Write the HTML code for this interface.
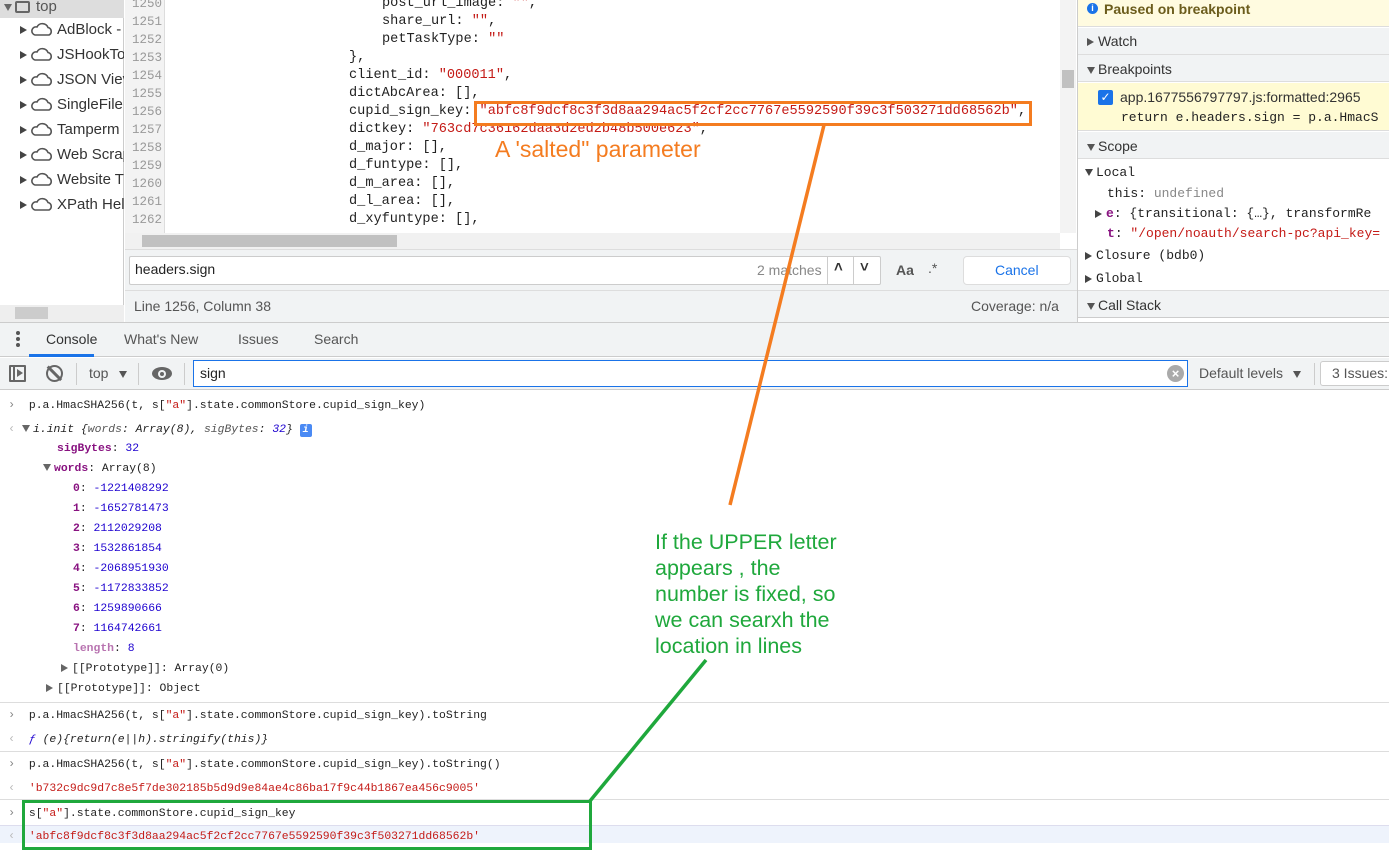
<!DOCTYPE html>
<html><head><meta charset="utf-8"><style>
*{margin:0;padding:0;box-sizing:border-box}
body{width:1389px;height:843px;overflow:hidden;background:#fff;font-family:"Liberation Sans","DejaVu Sans",sans-serif;font-size:14px;color:#222;position:relative}
.a{position:absolute;white-space:pre}
.m{font-family:"Liberation Mono","DejaVu Sans Mono",monospace}
.code{font-size:13.6px;color:#222}
.str{color:#c41a16}
.ln{color:#999;font-size:12.5px;text-align:right;width:38px}
.con{font-size:11.4px;color:#222;line-height:20px}
.k{color:#881280}
.n{color:#1c00cf}
.tri{display:inline-block;width:0;height:0;border-left:4px solid transparent;border-right:4px solid transparent;border-top:7px solid #666;margin-right:3px;vertical-align:middle}
.trr{display:inline-block;width:0;height:0;border-top:4px solid transparent;border-bottom:4px solid transparent;border-left:7px solid #666;margin-right:4px;vertical-align:middle}
.hline{position:absolute;height:1px;background:#ddd}
.chev{color:#888;font-size:12px}
</style></head><body>

<div class="a" style="left:0;top:0;width:124px;height:322px;background:#fff;border-right:1px solid #ccc"></div>
<div class="a" style="left:0;top:0;width:124px;height:18px;background:#ddd"></div>
<div class="a" style="left:4px;top:-2px;font-size:15px;color:#555"><span class="tri"></span><span style="display:inline-block;width:15px;height:12px;border:2px solid #666;border-radius:2px;vertical-align:middle;margin-right:6px"></span>top</div>
<div id="tree"></div>
<div class="a" style="left:0;top:305px;width:124px;height:17px;background:#eee"></div>
<div class="a" style="left:15px;top:307px;width:33px;height:12px;background:#ccc"></div>

<div class="a" style="left:125px;top:0;width:40px;height:233px;background:#f3f3f3;border-right:1px solid #ddd"></div>
<div id="code"></div>
<div class="a" style="left:1060px;top:0;width:16px;height:233px;background:#f3f3f3"></div>
<div class="a" style="left:1062px;top:70px;width:12px;height:18px;background:#c1c1c1"></div>
<div class="a" style="left:125px;top:233px;width:935px;height:16px;background:#f1f1f1"></div>
<div class="a" style="left:142px;top:235px;width:255px;height:12px;background:#c1c1c1"></div>
<div class="a" style="left:125px;top:249px;width:952px;height:1px;background:#ddd"></div>
<div class="a" style="left:125px;top:250px;width:952px;height:40px;background:#f1f3f4"></div>
<div class="a" style="left:129px;top:256px;width:752px;height:29px;background:#fff;border:1px solid #ccc;border-radius:2px"></div>
<div class="a" style="left:135px;top:261px;font-size:14px;color:#222">headers.sign</div>
<div class="a" style="left:757px;top:262px;font-size:14px;color:#888">2 matches</div>
<div class="a" style="left:827px;top:256px;width:1px;height:29px;background:#ccc"></div>
<div class="a" style="left:853px;top:256px;width:1px;height:29px;background:#ccc"></div>
<div class="a" style="left:834px;top:259px;font-size:15px;font-weight:bold;color:#333">&#708;</div>
<div class="a" style="left:860px;top:259px;font-size:15px;font-weight:bold;color:#333">&#709;</div>
<div class="a" style="left:896px;top:262px;font-size:14px;font-weight:bold;color:#555">Aa</div>
<div class="a" style="left:928px;top:260px;font-size:14px;color:#555">.*</div>
<div class="a" style="left:963px;top:256px;width:108px;height:29px;background:#fff;border:1px solid #ddd;border-radius:4px"></div>
<div class="a" style="left:995px;top:262px;font-size:14px;color:#1a73e8">Cancel</div>
<div class="a" style="left:125px;top:290px;width:952px;height:1px;background:#ddd"></div>
<div class="a" style="left:125px;top:291px;width:952px;height:31px;background:#f1f3f4"></div>
<div class="a" style="left:134px;top:298px;font-size:14px;color:#555">Line 1256, Column 38</div>
<div class="a" style="left:971px;top:298px;font-size:14px;color:#555">Coverage: n/a</div>

<div class="a" style="left:1077px;top:0;width:312px;height:322px;background:#fff;border-left:1px solid #ccc"></div>
<div class="a" style="left:1078px;top:0;width:311px;height:27px;background:#fffbe0;border-bottom:1px solid #ddd"></div>
<div class="a" style="left:1087px;top:3px;width:11px;height:11px;border-radius:50%;background:#1a73e8;color:#fff;font-size:9px;font-weight:bold;text-align:center;line-height:11px">i</div>
<div class="a" style="left:1104px;top:1px;font-size:14px;font-weight:bold;color:#6b5c1c">Paused on breakpoint</div>
<div class="a" style="left:1078px;top:28px;width:311px;height:27px;background:#f1f3f4;border-bottom:1px solid #ddd"></div>
<div class="a" style="left:1087px;top:33px;font-size:14px;color:#333"><span class="trr" style="border-left-color:#555"></span>Watch</div>
<div class="a" style="left:1078px;top:55px;width:311px;height:27px;background:#f1f3f4;border-bottom:1px solid #ddd"></div>
<div class="a" style="left:1087px;top:61px;font-size:14px;color:#333"><span class="tri" style="border-top-color:#555"></span>Breakpoints</div>
<div class="a" style="left:1078px;top:83px;width:311px;height:48px;background:#fffbd3;border-bottom:1px solid #ddd"></div>
<div class="a" style="left:1098px;top:90px;width:15px;height:15px;background:#1a73e8;border-radius:2px;color:#fff;font-size:12px;text-align:center;line-height:15px;font-weight:bold">&#10003;</div>
<div class="a" style="left:1120px;top:89px;font-size:14px;color:#333">app.1677556797797.js:formatted:2965</div>
<div class="a m" style="left:1121px;top:110px;font-size:13px;color:#222">return e.headers.sign = p.a.HmacS</div>
<div class="a" style="left:1078px;top:132px;width:311px;height:27px;background:#f1f3f4;border-bottom:1px solid #ddd"></div>
<div class="a" style="left:1087px;top:138px;font-size:14px;color:#333"><span class="tri" style="border-top-color:#555"></span>Scope</div>
<div class="a m" style="left:1085px;top:165px;font-size:13px;color:#222"><span class="tri" style="border-top-color:#444"></span>Local</div>
<div class="a m" style="left:1107px;top:186px;font-size:13px;color:#222">this: <span style="color:#888">undefined</span></div>
<div class="a m" style="left:1095px;top:206px;font-size:13px;color:#222"><span class="trr" style="border-left-color:#444"></span><span class="k" style="font-weight:bold">e</span>: {transitional: {…}, transformRe</div>
<div class="a m" style="left:1107px;top:226px;font-size:13px;color:#222"><span class="k" style="font-weight:bold">t</span>: <span class="str">"/open/noauth/search-pc?api_key=</span></div>
<div class="a m" style="left:1085px;top:248px;font-size:13px;color:#222"><span class="trr" style="border-left-color:#444"></span>Closure (bdb0)</div>
<div class="a m" style="left:1085px;top:271px;font-size:13px;color:#222"><span class="trr" style="border-left-color:#444"></span>Global</div>
<div class="a" style="left:1078px;top:290px;width:311px;height:28px;background:#f1f3f4;border-top:1px solid #ddd;border-bottom:1px solid #ccc"></div>
<div class="a" style="left:1087px;top:297px;font-size:14px;color:#333"><span class="tri" style="border-top-color:#555"></span>Call Stack</div>

<div class="a" style="left:0;top:322px;width:1389px;height:1px;background:#ccc"></div>
<div class="a" style="left:0;top:323px;width:1389px;height:34px;background:#f1f3f4;border-bottom:1px solid #ccc"></div>
<div class="a" style="left:16px;top:331px;width:4px;height:4px;border-radius:50%;background:#555;box-shadow:0 6px 0 #555,0 12px 0 #555"></div>
<div class="a" style="left:46px;top:331px;font-size:14px;color:#333">Console</div>
<div class="a" style="left:29px;top:354px;width:65px;height:3px;background:#1a73e8"></div>
<div class="a" style="left:124px;top:331px;font-size:14px;color:#555">What's New</div>
<div class="a" style="left:238px;top:331px;font-size:14px;color:#555">Issues</div>
<div class="a" style="left:314px;top:331px;font-size:14px;color:#555">Search</div>
<div class="a" style="left:0;top:358px;width:1389px;height:32px;background:#f1f3f4;border-bottom:1px solid #ccc"></div>
<div class="a" style="left:9px;top:365px;width:17px;height:17px;border:2px solid #666;border-radius:1px"></div>
<div class="a" style="left:13px;top:365px;width:2px;height:17px;background:#666"></div>
<div class="a" style="left:17px;top:369px;width:0;height:0;border-top:4px solid transparent;border-bottom:4px solid transparent;border-left:6px solid #666"></div>
<div class="a" style="left:46px;top:365px;width:17px;height:17px;border:2.5px solid #666;border-radius:50%"></div>
<div class="a" style="left:53px;top:364px;width:2.5px;height:19px;background:#666;transform:rotate(-45deg)"></div>
<div class="a" style="left:76px;top:363px;width:1px;height:22px;background:#ccc"></div>
<div class="a" style="left:89px;top:365px;font-size:14px;color:#555">top</div>
<div class="a" style="left:119px;top:371px;width:0;height:0;border-left:4px solid transparent;border-right:4px solid transparent;border-top:7px solid #555"></div>
<div class="a" style="left:138px;top:363px;width:1px;height:22px;background:#ccc"></div>
<div class="a" style="left:152px;top:367px;width:20px;height:13px;border-radius:50%;background:#666"></div>
<div class="a" style="left:158px;top:370px;width:8px;height:8px;border-radius:50%;background:#f1f3f4"></div>
<div class="a" style="left:160px;top:372px;width:4px;height:4px;border-radius:50%;background:#666"></div>
<div class="a" style="left:184px;top:363px;width:1px;height:22px;background:#ccc"></div>
<div class="a" style="left:193px;top:360px;width:995px;height:27px;background:#fff;border:1px solid #1a73e8"></div>
<div class="a" style="left:200px;top:365px;font-size:14px;color:#222">sign</div>
<div class="a" style="left:1167px;top:365px;width:17px;height:17px;border-radius:50%;background:#aaa;color:#fff;font-size:13px;text-align:center;line-height:17px;font-weight:bold">&#215;</div>
<div class="a" style="left:1199px;top:365px;font-size:14px;color:#555">Default levels</div>
<div class="a" style="left:1293px;top:371px;width:0;height:0;border-left:4px solid transparent;border-right:4px solid transparent;border-top:7px solid #555"></div>
<div class="a" style="left:1314px;top:363px;width:1px;height:22px;background:#ccc"></div>
<div class="a" style="left:1320px;top:361px;width:80px;height:25px;border:1px solid #ccc;border-radius:3px;background:#fff"></div>
<div class="a" style="left:1332px;top:365px;font-size:14px;color:#555">3 Issues:</div>

<div class="hline" style="left:0;top:702px;width:1389px"></div>
<div class="hline" style="left:0;top:751px;width:1389px"></div>
<div class="hline" style="left:0;top:799px;width:1389px"></div>
<div class="a" style="left:0;top:825px;width:1389px;height:18px;background:#eef3fc;border-top:1px solid #dde"></div>
<div class="a m con" style="left:8px;top:395px"><span class="chev">&#8250;</span>  p.a.HmacSHA256(t, s[<span class="str">"a"</span>].state.commonStore.cupid_sign_key)</div>
<div class="a m con" style="left:8px;top:419px"><span class="chev" style="color:#bbb">&#8249;</span> <span class="tri"></span><i>i.init {<span style="color:#555">words</span>: Array(8), <span style="color:#555">sigBytes</span>: <span class="n">32</span>}</i> <span style="display:inline-block;width:12px;height:13px;background:#4a8af4;color:#fff;border-radius:2px;font-size:10px;text-align:center;line-height:13px;font-style:italic;font-weight:bold">i</span></div>
<div class="a m con" style="left:57px;top:439px"><span class="k" style="font-weight:bold">sigBytes</span>: <span class="n">32</span></div>
<div class="a m con" style="left:43px;top:459px"><span class="tri"></span><span class="k" style="font-weight:bold">words</span>: Array(8)</div>
<div class="a m con" style="left:73px;top:479px;line-height:20px"><span class="k" style="font-weight:bold">0</span>: <span class="n">-1221408292</span>
<span class="k" style="font-weight:bold">1</span>: <span class="n">-1652781473</span>
<span class="k" style="font-weight:bold">2</span>: <span class="n">2112029208</span>
<span class="k" style="font-weight:bold">3</span>: <span class="n">1532861854</span>
<span class="k" style="font-weight:bold">4</span>: <span class="n">-2068951930</span>
<span class="k" style="font-weight:bold">5</span>: <span class="n">-1172833852</span>
<span class="k" style="font-weight:bold">6</span>: <span class="n">1259890666</span>
<span class="k" style="font-weight:bold">7</span>: <span class="n">1164742661</span>
<span style="color:#b873b0;font-weight:bold">length</span>: <span class="n">8</span></div>
<div class="a m con" style="left:61px;top:659px"><span class="trr"></span>[[Prototype]]: Array(0)</div>
<div class="a m con" style="left:46px;top:679px"><span class="trr"></span>[[Prototype]]: Object</div>
<div class="a m con" style="left:8px;top:705px"><span class="chev">&#8250;</span>  p.a.HmacSHA256(t, s[<span class="str">"a"</span>].state.commonStore.cupid_sign_key).toString</div>
<div class="a m con" style="left:8px;top:729px"><span class="chev" style="color:#bbb">&#8249;</span>  <i style="color:#1c00cf">ƒ</i> <i>(e){return(e||h).stringify(this)}</i></div>
<div class="a m con" style="left:8px;top:754px"><span class="chev">&#8250;</span>  p.a.HmacSHA256(t, s[<span class="str">"a"</span>].state.commonStore.cupid_sign_key).toString()</div>
<div class="a m con" style="left:8px;top:778px"><span class="chev" style="color:#bbb">&#8249;</span>  <span class="str">'b732c9dc9d7c8e5f7de302185b5d9d9e84ae4c86ba17f9c44b1867ea456c9005'</span></div>
<div class="a m con" style="left:8px;top:803px"><span class="chev">&#8250;</span>  s[<span class="str">"a"</span>].state.commonStore.cupid_sign_key</div>
<div class="a m con" style="left:8px;top:826px"><span class="chev" style="color:#bbb">&#8249;</span>  <span class="str">'abfc8f9dcf8c3f3d8aa294ac5f2cf2cc7767e5592590f39c3f503271dd68562b'</span></div>

<div class="a" style="left:474px;top:101px;width:558px;height:25px;border:3px solid #f47c20"></div>
<div class="a" style="left:495px;top:136px;font-size:23px;color:#f47c20">A 'salted" parameter</div>
<div class="a" style="left:22px;top:800px;width:570px;height:50px;border:3px solid #1fa83c"></div>
<div class="a" style="left:655px;top:529px;font-size:21.5px;color:#1fa83c;line-height:26px">If the UPPER letter
appears , the
number is fixed, so
we can searxh the
location in lines</div>
<svg class="a" style="left:0;top:0" width="1389" height="843">
<line x1="824" y1="125" x2="730" y2="505" stroke="#f47c20" stroke-width="3.5"/>
<line x1="590" y1="801" x2="706" y2="660" stroke="#1fa83c" stroke-width="3.5"/>
</svg>

<script>
var t=["AdBlock -","JSHookTo","JSON Viev","SingleFile","Tamperm","Web Scrap","Website T","XPath Hel"],h="";
t.forEach(function(s,i){h+='<div class="a" style="left:20px;top:'+(21+i*25)+'px;width:104px;overflow:hidden;font-size:15px;color:#333"><span class="trr" style="border-left-color:#444"></span><svg width="22" height="14" style="vertical-align:-2px;margin-right:4px"><path d="M4 13 H18 A4 4 0 0 0 17 5.5 A6 6 0 0 0 6 5 A4 4 0 0 0 4 13Z" fill="none" stroke="#555" stroke-width="1.6"/></svg>'+s+'</div>';});
document.getElementById("tree").innerHTML=h;
var c=[[4,'post_url_image: <span class="str">""</span>,'],[4,'share_url: <span class="str">""</span>,'],[4,'petTaskType: <span class="str">""</span>'],[0,'},'],[0,'client_id: <span class="str">"000011"</span>,'],[0,'dictAbcArea: [],'],[0,'cupid_sign_key: <span class="str">"abfc8f9dcf8c3f3d8aa294ac5f2cf2cc7767e5592590f39c3f503271dd68562b"</span>,'],[0,'dictkey: <span class="str">"763cd7c36162daa3d2ed2b48b500e623"</span>,'],[0,'d_major: [],'],[0,'d_funtype: [],'],[0,'d_m_area: [],'],[0,'d_l_area: [],'],[0,'d_xyfuntype: [],']];
h="";c.forEach(function(l,i){var y=-4+i*18;h+='<div class="a m ln" style="left:124px;top:'+(y+1)+'px">'+(1250+i)+'</div><div class="a m code" style="left:'+(l[0]?382:349)+'px;top:'+y+'px">'+l[1]+'</div>';});
document.getElementById("code").innerHTML=h;
</script>
</body></html>
